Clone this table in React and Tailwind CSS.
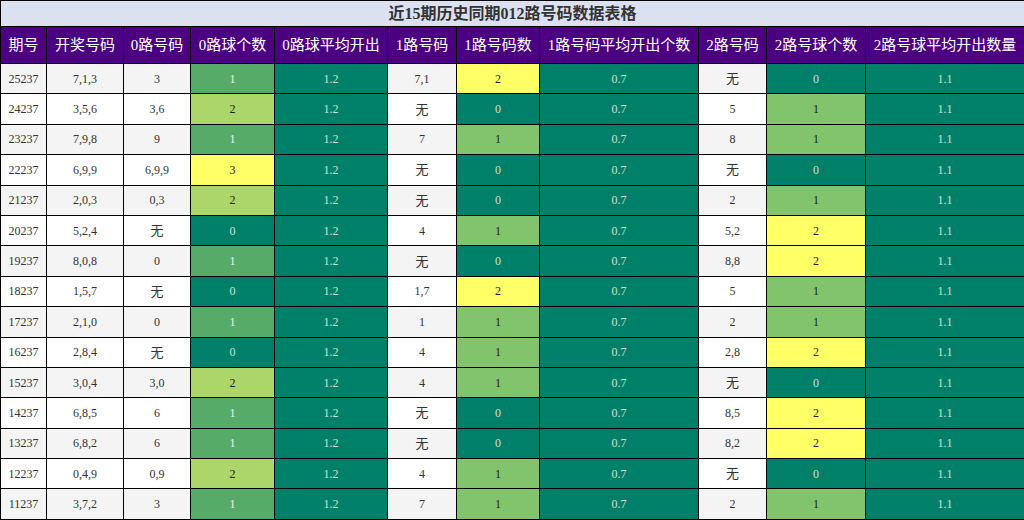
import React from "react";

const rows = [
  ["25237","7,1,3","3",1,"1.2","7,1",2,"0.7","无",0,"1.1"],
  ["24237","3,5,6","3,6",2,"1.2","无",0,"0.7","5",1,"1.1"],
  ["23237","7,9,8","9",1,"1.2","7",1,"0.7","8",1,"1.1"],
  ["22237","6,9,9","6,9,9",3,"1.2","无",0,"0.7","无",0,"1.1"],
  ["21237","2,0,3","0,3",2,"1.2","无",0,"0.7","2",1,"1.1"],
  ["20237","5,2,4","无",0,"1.2","4",1,"0.7","5,2",2,"1.1"],
  ["19237","8,0,8","0",1,"1.2","无",0,"0.7","8,8",2,"1.1"],
  ["18237","1,5,7","无",0,"1.2","1,7",2,"0.7","5",1,"1.1"],
  ["17237","2,1,0","0",1,"1.2","1",1,"0.7","2",1,"1.1"],
  ["16237","2,8,4","无",0,"1.2","4",1,"0.7","2,8",2,"1.1"],
  ["15237","3,0,4","3,0",2,"1.2","4",1,"0.7","无",0,"1.1"],
  ["14237","6,8,5","6",1,"1.2","无",0,"0.7","8,5",2,"1.1"],
  ["13237","6,8,2","6",1,"1.2","无",0,"0.7","8,2",2,"1.1"],
  ["12237","0,4,9","0,9",2,"1.2","4",1,"0.7","无",0,"1.1"],
  ["11237","3,7,2","3",1,"1.2","7",1,"0.7","2",1,"1.1"],
];

const headers = ["期号","开奖号码","0路号码","0路球个数","0路球平均开出","1路号码","1路号码数","1路号码平均开出个数","2路号码","2路号球个数","2路号球平均开出数量"];
const widths = ["w-[46px]","w-[77px]","w-[67px]","w-[84px]","w-[113px]","w-[69px]","w-[83px]","w-[159px]","w-[68px]","w-[99px]","w-[159px]"];

const font = { fontFamily: '"Liberation Serif","Noto Sans CJK SC",serif' };

function zeroCls(v) {
  if (v === 0) return "bg-[#008068] text-[#c8e0d8]";
  if (v === 1) return "bg-[#56ab69] text-[#e8f4e8]";
  if (v === 2) return "bg-[#acd66a] text-[#222]";
  return "bg-[#ffff66] text-[#222]";
}
function otherCls(v) {
  if (v === 0) return "bg-[#008068] text-[#c8e0d8]";
  if (v === 1) return "bg-[#82c46c] text-[#222]";
  return "bg-[#ffff66] text-[#222]";
}

function Txt({ v }) {
  if (v === "无") return <span className="text-[13px]">无</span>;
  return <span>{v}</span>;
}

export default function App() {
  return (
    <div className="w-[1024px] h-[520px] overflow-hidden bg-white" style={font}>
      <table className="w-[1024px] table-fixed border-collapse text-center">
        <colgroup>
          {widths.map((w, i) => <col key={i} className={w} />)}
        </colgroup>
        <thead>
          <tr className="h-[26px]">
            <th colSpan={11} className="border border-black bg-[#dbe1f1] text-[16px] font-bold text-[#333] leading-none p-0">
              近15期历史同期012路号码数据表格
            </th>
          </tr>
          <tr className="h-[37px]">
            {headers.map((h, i) => (
              <th key={i} className="border border-black bg-[#4b0082] text-white text-[15px] font-normal p-0 whitespace-nowrap leading-none">
                {h}
              </th>
            ))}
          </tr>
        </thead>
        <tbody>
          {rows.map((r, i) => {
            const base = i % 2 === 0 ? "bg-[#f4f4f4]" : "bg-white";
            const plain = `border border-black ${base} text-[#333] p-0`;
            return (
              <tr key={i} className="h-[30.4px] text-[12px] leading-none">
                <td className={plain}>{r[0]}</td>
                <td className={plain}>{r[1]}</td>
                <td className={plain}><Txt v={r[2]} /></td>
                <td className={`border border-black p-0 ${zeroCls(r[3])}`}>{r[3]}</td>
                <td className="border border-black p-0 bg-[#008068] text-[#c8e0d8]">{r[4]}</td>
                <td className={plain}><Txt v={r[5]} /></td>
                <td className={`border border-black p-0 ${otherCls(r[6])}`}>{r[6]}</td>
                <td className="border border-black p-0 bg-[#008068] text-[#c8e0d8]">{r[7]}</td>
                <td className={plain}><Txt v={r[8]} /></td>
                <td className={`border border-black p-0 ${otherCls(r[9])}`}>{r[9]}</td>
                <td className="border border-black p-0 bg-[#008068] text-[#c8e0d8]">{r[10]}</td>
              </tr>
            );
          })}
        </tbody>
      </table>
    </div>
  );
}
